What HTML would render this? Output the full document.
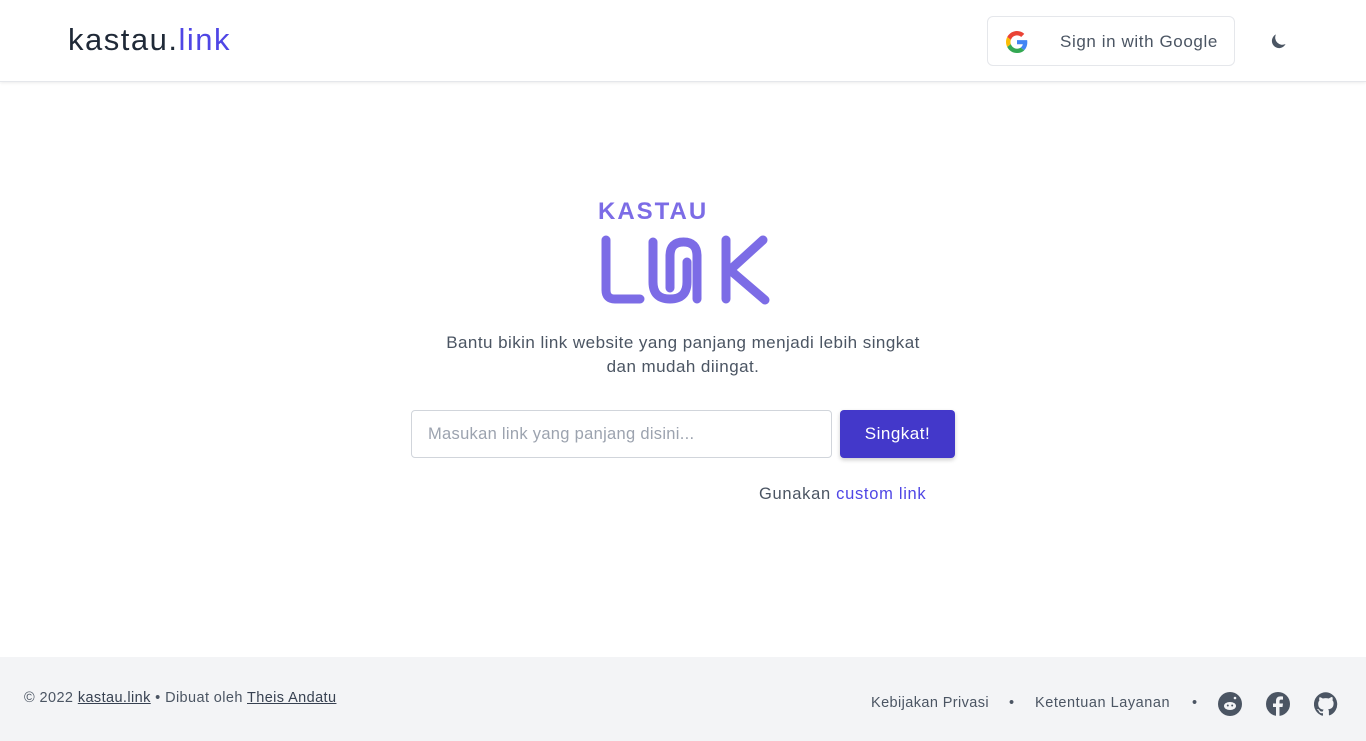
<!DOCTYPE html>
<html><head><meta charset="utf-8"><style>
*{box-sizing:border-box;margin:0;padding:0}
body{width:1366px;height:741px;font-family:"Liberation Sans",sans-serif;background:#fff;position:relative;overflow:hidden;color:#4b5563}
header{height:82px;border-bottom:1px solid #e5e7eb;box-shadow:0 1px 3px rgba(0,0,0,.08);position:relative}
.brand{position:absolute;left:68px;top:22px;font-size:31px;color:#1f2937;letter-spacing:1.5px}
.brand span{color:#4f46e5}
.gbtn{position:absolute;left:987px;top:16px;width:248px;height:50px;border:1px solid #e5e7eb;border-radius:6px}
.gbtn .t{position:absolute;left:72px;top:15px;font-size:17px;color:#4b5563;letter-spacing:.6px}
.gbtn svg{position:absolute;left:18px;top:14px}
.moon{position:absolute;left:1270px;top:32px}
.tag{position:absolute;left:0;width:1366px;top:331px;text-align:center;font-size:17px;letter-spacing:.45px;line-height:24px;color:#4b5563}
.inp{position:absolute;left:411px;top:410px;width:421px;height:48px;border:1px solid #d1d5db;border-radius:4px;font-size:16.5px;color:#9ca3af;padding:14px 16px;letter-spacing:.3px}
.btn{position:absolute;left:840px;top:410px;width:115px;height:48px;background:#4338ca;border-radius:4px;color:#fff;font-size:17px;text-align:center;line-height:48px;box-shadow:0 2px 4px rgba(0,0,0,.2);letter-spacing:.5px}
.cl{position:absolute;left:759px;top:485px;font-size:16.5px;color:#4b5563;letter-spacing:.7px}
.cl span{color:#4f46e5}
footer{position:absolute;left:0;top:657px;width:1366px;height:84px;background:#f3f4f6;font-size:14.5px;color:#4b5563}
footer u{color:#374151}
.fl{position:absolute;left:24px;top:33px;letter-spacing:.4px}
.fr{position:absolute;top:38px;font-size:14.5px}
.ic{position:absolute;top:35px}
</style></head><body>
<header>
<div class="brand">kastau.<span>link</span></div>
<div class="gbtn"><svg width="22" height="22" viewBox="0 0 48 48"><path fill="#EA4335" d="M24 9.5c3.5 0 6.6 1.2 9.1 3.6l6.8-6.8C35.8 2.4 30.3 0 24 0 14.6 0 6.6 5.4 2.7 13.2l7.9 6.2C12.5 13.6 17.8 9.5 24 9.5z"/><path fill="#4285F4" d="M46.5 24.5c0-1.6-.1-3.1-.4-4.5H24v9h12.7c-.6 2.9-2.200 5.4-4.7 7.1l7.6 5.9c4.4-4.1 6.9-10.1 6.9-17.5z"/><path fill="#FBBC05" d="M10.5 28.6c-.5-1.4-.8-3-.8-4.6s.3-3.2.8-4.6l-7.9-6.2C1 16.5 0 20.1 0 24s1 7.5 2.7 10.8l7.8-6.2z"/><path fill="#34A853" d="M24 48c6.5 0 11.9-2.1 15.9-5.8L32.2 36.3c-2.1 1.4-4.9 2.3-8.2 2.300-6.2 0-11.5-4.2-13.4-9.9l-7.9 6.1C6.6 42.6 14.6 48 24 48z"/></svg><div class="t">Sign in with Google</div></div>
<svg class="moon" width="18" height="18" viewBox="0 0 20 20"><path fill="#4b5563" d="M17.3 13.4A8 8 0 016.6 2.7 8 8 0 1017.3 13.4z"/></svg>
</header>
<svg style="position:absolute;left:590px;top:195px" width="190" height="115" viewBox="590 195 190 115">
<text x="598" y="219" font-family="Liberation Sans" font-weight="bold" font-size="24" fill="#7c6ce6" letter-spacing="2">KASTAU</text>
<g fill="none" stroke="#7c6ce6" stroke-width="9" stroke-linecap="round" stroke-linejoin="round">
<path d="M606 240V290q0 9 9 9H640"/>
<path d="M653 242V282q0 17 17 17t17-17V262"/>
<path d="M670 288V256q0-14 13.5-14t13.5 14V299"/>
<path d="M726 240V299M763 240L730 270L765 300"/>
</g></svg>
<div class="tag">Bantu bikin link website yang panjang menjadi lebih singkat<br>dan mudah diingat.</div>
<div class="inp">Masukan link yang panjang disini...</div>
<div class="btn">Singkat!</div>
<div class="cl">Gunakan <span>custom link</span></div>
<footer>
<div class="fl">© 2022 <u>kastau.link</u> • Dibuat oleh <u>Theis Andatu</u></div>
<div class="fr" style="left:871px;letter-spacing:.4px">Kebijakan Privasi</div>
<div class="fr" style="left:1009px">•</div>
<div class="fr" style="left:1035px;letter-spacing:.55px">Ketentuan Layanan</div>
<div class="fr" style="left:1192px">•</div>
<svg class="ic" style="left:1218px" width="24" height="24" viewBox="0 0 24 24"><circle cx="12" cy="12" r="12" fill="#4b5563"/><ellipse cx="12" cy="14" rx="6" ry="4" fill="#f3f4f6"/><circle cx="17" cy="6" r="1.3" fill="#f3f4f6"/><circle cx="9.8" cy="13.5" r="1" fill="#4b5563"/><circle cx="14.2" cy="13.5" r="1" fill="#4b5563"/></svg>
<svg class="ic" style="left:1266px" width="24" height="24" viewBox="0 0 24 24"><circle cx="12" cy="12" r="12" fill="#4b5563"/><path d="M13.5 24V15h3l.5-3.5h-3.5V9.3c0-1 .3-1.7 1.8-1.7H17V4.5c-.3 0-1.4-.1-2.6-.1-2.6 0-4.4 1.6-4.4 4.5v2.6H7V15h3v9z" fill="#f3f4f6"/></svg>
<svg class="ic" style="left:1314px" width="24" height="24" viewBox="0 0 24 24"><path fill="#4b5563" d="M12 .3a12 12 0 00-3.8 23.4c.6.1.8-.3.8-.6v-2c-3.300.7-4-1.6-4-1.6-.6-1.4-1.4-1.8-1.4-1.8-1-.7.1-.7.1-.7 1.2.1 1.8 1.2 1.8 1.2 1 1.8 2.8 1.3 3.5 1 0-.8.4-1.3.7-1.6-2.7-.3-5.5-1.3-5.5-5.9 0-1.3.5-2.4 1.2-3.2-.1-.3-.5-1.5.1-3.2 0 0 1-.3 3.3 1.2a11.5 11.5 0 016 0C17.3 4.7 18.3 5 18.3 5c.7 1.7.3 2.9.1 3.2.8.8 1.2 1.9 1.2 3.2 0 4.6-2.8 5.600-5.5 5.9.4.4.8 1.1.8 2.2v3.3c0 .3.2.7.8.6A12 12 0 0012 .3"/></svg>
</footer>
</body></html>
